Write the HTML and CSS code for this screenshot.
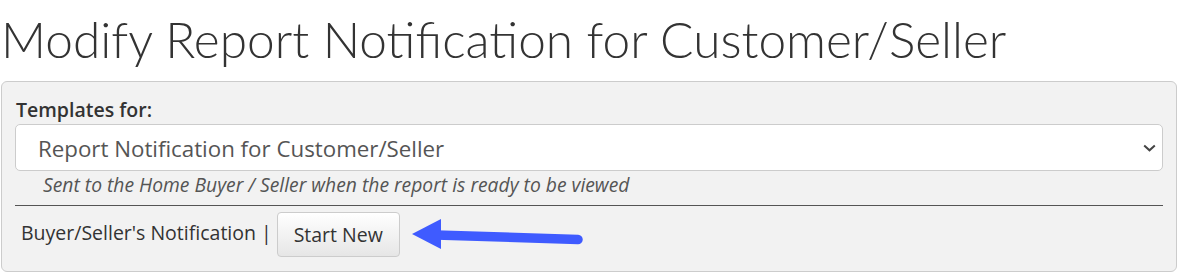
FILE: index.html
```html
<!DOCTYPE html>
<html>
<head>
<meta charset="utf-8">
<link rel="stylesheet" href="styles.css">
</head>
<body>
<div class="page">
  <h1 class="title">Modify Report Notification for Customer/Seller</h1>
  <div class="panel">
    <label class="label">Templates for:</label>
    <div class="select">
      <span class="select-text">Report Notification for Customer/Seller</span>
      <svg class="chevron" width="13" height="8" viewBox="0 0 13 8"><path d="M1.2 1.5 L6.5 6.3 L11.8 1.5" fill="none" stroke="#444" stroke-width="2"/></svg>
    </div>
    <div class="hint">Sent to the Home Buyer / Seller when the report is ready to be viewed</div>
    <hr class="rule">
    <div class="row">
      <span class="row-text">Buyer/Seller's Notification |</span>
      <button class="btn">Start New</button>
      <svg class="arrow" width="185" height="40" viewBox="0 0 185 40">
        <line x1="30" y1="20" x2="172" y2="24.5" stroke="#3f5bff" stroke-width="9.5" stroke-linecap="round"/>
        <polygon points="6,19 35,4 35,34" fill="#3f5bff"/>
      </svg>
    </div>
  </div>
</div>
</body>
</html>
```
FILE: styles.css
```css
html, body {
  margin: 0;
  padding: 0;
  background: #ffffff;
}
.page {
  padding: 9px 1px 0 1px;
  width: 1176px;
}
.title {
  font-family: Lato, "Open Sans", sans-serif;
  font-weight: 300;
  font-size: 49.6px;
  line-height: 60px;
  color: #333333;
  margin: 0 0 12px 0;
  white-space: nowrap;
}
.panel {
  background: #f2f2f2;
  border: 1px solid #cccccc;
  border-radius: 6px;
  padding: 15px 13px 14px 13px;
  font-family: "Open Sans", sans-serif;
  color: #333333;
  display: flex;
  flex-direction: column;
}
.label {
  font-weight: 600;
  font-size: 19.5px;
  line-height: 26px;
  padding-left: 1px;
}
.select {
  box-sizing: border-box;
  margin-top: 1px;
  height: 47px;
  background: #ffffff;
  border: 1px solid #cccccc;
  border-radius: 5px;
  display: flex;
  align-items: center;
  justify-content: space-between;
  padding: 2px 6px 0 22px;
}
.select-text {
  font-size: 22.3px;
  color: #555555;
}
.chevron {
  display: block;
  margin-top: -2px;
}
.hint {
  font-style: italic;
  font-size: 19.3px;
  line-height: 24px;
  color: #555555;
  padding-left: 28px;
  margin-top: 2px;
}
.rule {
  border: 0;
  border-top: 1px solid #555555;
  margin: 8px 0 6px 0;
  height: 0;
}
.row {
  display: flex;
  align-items: center;
  padding-left: 6px;
}
.row-text {
  font-size: 19.5px;
  line-height: 26px;
  color: #333333;
  margin-bottom: 4px;
}
.btn {
  margin-left: 5px;
  height: 45px;
  width: 123px;
  font-family: "Open Sans", sans-serif;
  font-size: 19.5px;
  color: #333333;
  background: linear-gradient(#ffffff, #e6e6e6);
  border: 1px solid #cccccc;
  border-radius: 4px;
  padding: 0;
}
.arrow {
  display: block;
  margin-left: 6px;
}
```
